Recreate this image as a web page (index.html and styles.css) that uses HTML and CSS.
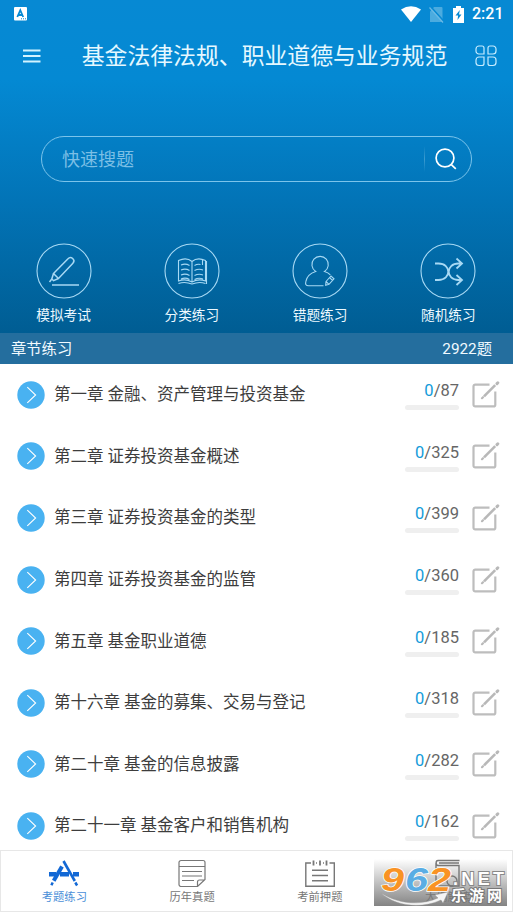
FILE: index.html
```html
<!DOCTYPE html>
<html lang="zh-CN">
<head>
<meta charset="utf-8">
<title>考题练习</title>
<link rel="stylesheet" href="styles.css">
</head>
<body>
<svg class="defs" width="0" height="0">
  <symbol id="go" viewBox="0 0 28 28"><circle cx="14" cy="14" r="13.7" fill="#49b2f1"/><path d="M10.3 6.2l8.3 7.8-8.3 7.8" fill="none" stroke="#fff" stroke-width="1.1"/></symbol>
  <symbol id="edit" viewBox="0 0 28 28"><path d="M17.500 3.600H3.200a1.700 1.700 0 0 0-1.700 1.700v18.400a1.700 1.700 0 0 0 1.700 1.700h18.400a1.700 1.700 0 0 0 1.700-1.700V10.500" fill="none" stroke="#bdbdbd" stroke-width="2.200"/><path d="M12 15.300L23.200 4.100" stroke="#b8b8b8" stroke-width="2.600" fill="none"/><path d="M25 2.600l.8-.8" stroke="#b8b8b8" stroke-width="3" stroke-linecap="round"/><path d="M10 17.200l1-1" stroke="#b8b8b8" stroke-width="2.200" stroke-linecap="round"/></symbol>
</svg>
<div class="app">
  <header class="hero">
    <div class="status">
      <svg width="13" height="14" viewBox="0 0 13 14"><rect width="13" height="13.5" rx="1" fill="#fff"/><path d="M3.3 10L6.3 3.2 9.2 10M4.6 8h3.6" fill="none" stroke="#0789d3" stroke-width="1.8"/><path d="M7 11.8h5" stroke="#0789d3" stroke-dasharray="1 1"/></svg>
      <span class="spacer"></span>
      <svg class="wifi" width="20" height="16" viewBox="0 0 20 16"><path d="M0 3.5Q10-3 20 3.5L10 16z" fill="#fff"/></svg>
      <svg class="sim" width="15" height="17" viewBox="0 0 15 17"><path d="M5 1h7.5a1 1 0 0 1 1 1v14H1V5.500z" fill="#4babdf"/><path d="M2 1l12.500 14" stroke="#0789d3" stroke-width="1.600"/><path d="M.5 1.500l13.500 15" stroke="#69b9e5" stroke-width="1.200"/></svg>
      <svg class="battery" width="11" height="17" viewBox="0 0 11 17"><path d="M3 0h5v2h3v15H0V2h3z" fill="#fff"/><path d="M6.8 4L2.5 9.500h2.600L4.500 14l4-5.600H6z" fill="#0789d3"/></svg>
      <span class="clock">2:21</span>
    </div>
    <div class="titlebar">
      <svg width="18" height="14" viewBox="0 0 18 14"><path d="M0 1.500h17.500M0 7h17.500M0 12.500h17.500" stroke="#d2f3ff" stroke-width="1.800"/></svg>
      <h1>基金法律法规、职业道德与业务规范</h1>
      <svg width="22" height="22" viewBox="0 0 22 22" fill="none" stroke="#c7ecff" stroke-width="1.200"><path d="M4 1h3a2 2 0 0 1 2 2v6H4a3 3 0 0 1-3-3V4a3 3 0 0 1 3-3zM18 1h-3a2 2 0 0 0-2 2v6h5a3 3 0 0 0 3-3V4a3 3 0 0 0-3-3zM4 20.500h3a2 2 0 0 0 2-2V12H4a3 3 0 0 0-3 3v2.500a3 3 0 0 0 3 3zM18 20.500h-3a2 2 0 0 1-2-2V12h5a3 3 0 0 1 3 3v2.500a3 3 0 0 1-3 3z"/></svg>
    </div>
    <div class="search">
      <span>快速搜题</span>
      <i></i>
      <svg width="22" height="22" viewBox="0 0 22 22" fill="none" stroke="#fff" stroke-width="1.700"><circle cx="10" cy="10" r="8.900"/><path d="M15.800 16.200l5 4.600"/></svg>
    </div>
    <nav class="shortcuts">
      <a><svg viewBox="0 0 56 56"><circle cx="28" cy="28" r="27"/><g stroke-width="1.500"><path d="M17.500 30.500L32 15.700a3.300 3.300 0 0 1 4.900 4.500L22.500 35.500zM17.500 30.500l-1.700 5.400 1.700 1.800 5-2.200M15.800 36l-2.300 3"/><path d="M16 42h27"/></g></svg><span>模拟考试</span></a>
      <a><svg viewBox="0 0 56 56"><circle cx="28" cy="28" r="27"/><path d="M28 18.500c-3.500-3-9-3-13.500-1V38c4-1.500 9-1.500 13.500 1 4.500-2.500 9.500-2.500 13.500-1V17.500c-4.500-2-10-2-13.500 1V39M14.500 40.500c4-1.500 9-1.300 13.500.5 4.500-1.800 9.500-2 13.500-.5M42.500 18v23M38.500 16.500V22M17 22c3-1.300 6-1 8.500.5M17 27c3-1.300 6-1 8.500.5M17 32c3-1.300 6-1 8.500.5M17 36c3-1.300 6-1 8.500.5M30.500 22.500c2-1.200 4-1.500 6-1M30.500 27.500c3-1.500 6-1.500 8.500-.5M30.500 32.500c3-1.500 6-1.500 8.500-.5M30.500 36.500c3-1.500 6-1.500 8.500-.5"/></svg><span>分类练习</span></a>
      <a><svg viewBox="0 0 56 56"><circle cx="28" cy="28" r="27"/><path d="M31.500 42.700H16.500c-2.500 0-3.300-1.200-2.700-4 1-5.700 4.500-8.500 9.900-10.200a8.200 8.200 0 1 1 8.800 0c2.500.7 4.300 1.700 5.800 3.300"/><path d="M34 38.500l5-5.500 3 2.800-5 5.500-3.300 1zM37.500 34.500l3 2.800M34 38.500l3 2.800"/></svg><span>错题练习</span></a>
      <a><svg viewBox="0 0 56 56"><circle cx="28" cy="28" r="27"/><g stroke-width="1.800"><path d="M15 20.500h3.500c13 0 13 16.500 0 16.500H15M42 20.500h-3.500c-13 0-13 16.500 0 16.500H42M36.500 15.500l5.500 5-5.500 5M36.500 32l5.500 5-5.500 5"/></g></svg><span>随机练习</span></a>
    </nav>
    <div class="section"><span>章节练习</span><span>2922题</span></div>
  </header>
  <main>
    <div class="row"><svg class="go"><use href="#go"/></svg><h2>第一章 金融、资产管理与投资基金</h2><div class="count"><p><b>0</b>/87</p><i></i></div><svg class="edit"><use href="#edit"/></svg></div>
    <div class="row"><svg class="go"><use href="#go"/></svg><h2>第二章 证券投资基金概述</h2><div class="count"><p><b>0</b>/325</p><i></i></div><svg class="edit"><use href="#edit"/></svg></div>
    <div class="row"><svg class="go"><use href="#go"/></svg><h2>第三章 证券投资基金的类型</h2><div class="count"><p><b>0</b>/399</p><i></i></div><svg class="edit"><use href="#edit"/></svg></div>
    <div class="row"><svg class="go"><use href="#go"/></svg><h2>第四章 证券投资基金的监管</h2><div class="count"><p><b>0</b>/360</p><i></i></div><svg class="edit"><use href="#edit"/></svg></div>
    <div class="row"><svg class="go"><use href="#go"/></svg><h2>第五章 基金职业道德</h2><div class="count"><p><b>0</b>/185</p><i></i></div><svg class="edit"><use href="#edit"/></svg></div>
    <div class="row"><svg class="go"><use href="#go"/></svg><h2>第十六章 基金的募集、交易与登记</h2><div class="count"><p><b>0</b>/318</p><i></i></div><svg class="edit"><use href="#edit"/></svg></div>
    <div class="row"><svg class="go"><use href="#go"/></svg><h2>第二十章 基金的信息披露</h2><div class="count"><p><b>0</b>/282</p><i></i></div><svg class="edit"><use href="#edit"/></svg></div>
    <div class="row"><svg class="go"><use href="#go"/></svg><h2>第二十一章 基金客户和销售机构</h2><div class="count"><p><b>0</b>/162</p><i></i></div><svg class="edit"><use href="#edit"/></svg></div>
  </main>
  <nav class="tabs">
    <a class="active"><svg viewBox="0 0 32 28" fill="none" stroke="#1268d5"><path d="M1 15.200h7M12 15.200h9M25 15.200h6" stroke-width="4.500"/><path d="M14 7.500L5.700 21.700" stroke-width="4"/><path d="M15.500 2l11.300 20" stroke-width="2.600"/><path d="M4.700 23.500l-1.300 2.800M27.300 23.500l1.800 3" stroke-width="2.500"/></svg><span>考题练习</span></a>
    <a><svg viewBox="0 0 32 28" fill="none" stroke="#777" stroke-width="1.200"><path d="M21 27.500H5a2 2 0 0 1-2-2V3.500a2 2 0 0 1 2-2h22a2 2 0 0 1 2 2v17l-7.500 7v-4.500a2 2 0 0 1 2-2H29M3 7.500h26M6 12.500h20M6 17h20M6 21.500h12"/></svg><span>历年真题</span></a>
    <a><svg viewBox="0 0 32 28" fill="none" stroke="#777" stroke-width="1.400"><path d="M7 4H1.800v23.300h28.500V4H25.500M8 11.300h16M8 16.500h16M8 21.700h16M12 4h1M19 4h1"/><path d="M9.500 1.500v5M16 1.500v5M22.500 1.500v5" stroke-width="1.800"/></svg><span>考前押题</span></a>
    <a><svg viewBox="0 0 32 28" fill="none" stroke="#777" stroke-width="1.400"><path d="M27.500 1.500H6c-2.500 0-2.500 5 0 5h21v20.500H4V4M7 4h20"/><circle cx="20" cy="22" r="5"/></svg><span>大纲解读</span></a>
    <div class="brand">
      <svg width="133" height="47" viewBox="0 0 133 47">
        <text class="num orange" x="7" y="32" textLength="23" lengthAdjust="spacingAndGlyphs">9</text>
        <text class="num sky" x="31" y="32" textLength="23" lengthAdjust="spacingAndGlyphs">6</text>
        <text class="num orange" x="54" y="32" textLength="23" lengthAdjust="spacingAndGlyphs">2</text>
        <text class="net" x="79" y="26" textLength="51" lengthAdjust="spacing">.NET</text>
        <text class="cn" x="77" y="42" textLength="51" lengthAdjust="spacing">乐游网</text>
        <path d="M7 34C24 45 46 47 64 39l-3-3 13-3-5 11-2-3C45 51 20 46 7 34z" fill="#f4f4f4" stroke="#999" stroke-width=".4"/>
      </svg>
    </div>
  </nav>
</div>
</body>
</html>
```

FILE: styles.css
```css
* { box-sizing: border-box; }
body { margin: 0; font-family: Roboto, "Noto Sans CJK SC", sans-serif; background: #fff; }
h1, h2, p { margin: 0; font-weight: 400; }
svg { display: block; flex: none; }
.defs { position: absolute; }
.app { width: 513px; height: 912px; display: flex; flex-direction: column; overflow: hidden; }

.hero { height: 364px; flex: none; display: flex; flex-direction: column; background: linear-gradient(#0789d3 0, #0489d3 80px, #0274b7 200px, #005d93 333px, #005d93 100%); }
.status { height: 28px; display: flex; align-items: center; padding: 0 10px 0 14px; }
.spacer { flex: 1; }
.sim { margin-left: 8px; }
.battery { margin-left: 9px; }
.clock { margin-left: 8px; width: 31px; color: #fff; font-size: 16px; font-weight: 500; line-height: 30px; white-space: nowrap; }
.titlebar { height: 55px; display: flex; align-items: center; justify-content: space-between; padding: 0 16px 0 23px; }
.titlebar h1 { color: #e5f8ff; font-size: 22.85px; line-height: 34px; white-space: nowrap; margin: 2px 0 0 13px; }
.search { margin: 53px 41px 0; height: 46px; flex: none; border: 1px solid #7bc4eb; border-radius: 23px; display: flex; align-items: center; padding: 0 14px 0 20px; }
.search span { flex: 1; color: #7bbfe5; font-size: 18px; line-height: 26px; margin-top: 2px; }
.search i { width: 1px; height: 26px; margin-right: 10px; background: linear-gradient(#3c9cd000, #3c9cd0, #3c9cd000); }
.shortcuts { margin-top: 61px; height: 90px; flex: none; display: grid; grid-template-columns: repeat(4, 1fr); }
.shortcuts a { display: flex; flex-direction: column; align-items: center; padding-right: 1px; }
.shortcuts svg { width: 56px; height: 56px; fill: none; stroke: #a7d9f4; stroke-width: 1.1; }
.shortcuts span { margin-top: 6px; color: #edf9ff; font-size: 13.7px; line-height: 20px; }
.section { height: 31px; flex: none; background: #246e9e; color: #f1faff; display: flex; align-items: center; justify-content: space-between; padding: 0 21px 3px 11px; font-size: 15.3px; }

main { height: 486px; flex: none; overflow: hidden; }
.row { height: 61.6px; display: flex; align-items: center; padding: 0 13px 0 17px; }
.go { width: 28px; height: 28px; }
.row h2 { flex: 1; margin: 1px 0 0 9px; color: #3d3d3d; font-size: 16.5px; line-height: 26px; white-space: nowrap; }
.count { width: 54px; text-align: right; }
.count p { color: #666; font-size: 16.5px; line-height: 20px; padding-top: 2px; }
.count b { color: #139bda; font-weight: 400; }
.count i { display: block; height: 5px; margin-top: 4px; border-radius: 2.5px; background: #efefef; }
.edit { width: 28px; height: 28px; margin-left: 13px; }

.tabs { position: relative; height: 62px; flex: none; display: grid; grid-template-columns: repeat(4, 1fr); border: 1px solid #e7e7e7; background: #fff; }
.tabs a { display: flex; flex-direction: column; align-items: center; padding: 8px 1px 0 0; color: #777; font-size: 11.3px; }
.tabs a svg { width: 32px; height: 28px; }
.tabs span { line-height: 17px; margin-top: 2px; }
.tabs .active { color: #4b8fd8; }
.brand { position: absolute; left: 373px; top: 8px; width: 133px; height: 47px; background: linear-gradient(#99999900, #777777e8); }
.brand text { paint-order: stroke; stroke: #fff; stroke-width: 2px; font-family: "Liberation Sans", sans-serif; font-weight: 700; }
.brand .num { font-size: 34px; font-style: italic; }
.brand .orange { fill: #f99324; stroke: #fff; stroke-width: 1.5px; }
.brand .sky { fill: #5aade4; stroke: #fff; stroke-width: 1.5px; }
.brand .net { font-size: 18px; fill: #fff; stroke: #888; }
.brand .cn { font-family: "Noto Sans CJK SC", sans-serif; font-size: 15px; fill: #fff; stroke: #777; }
```
